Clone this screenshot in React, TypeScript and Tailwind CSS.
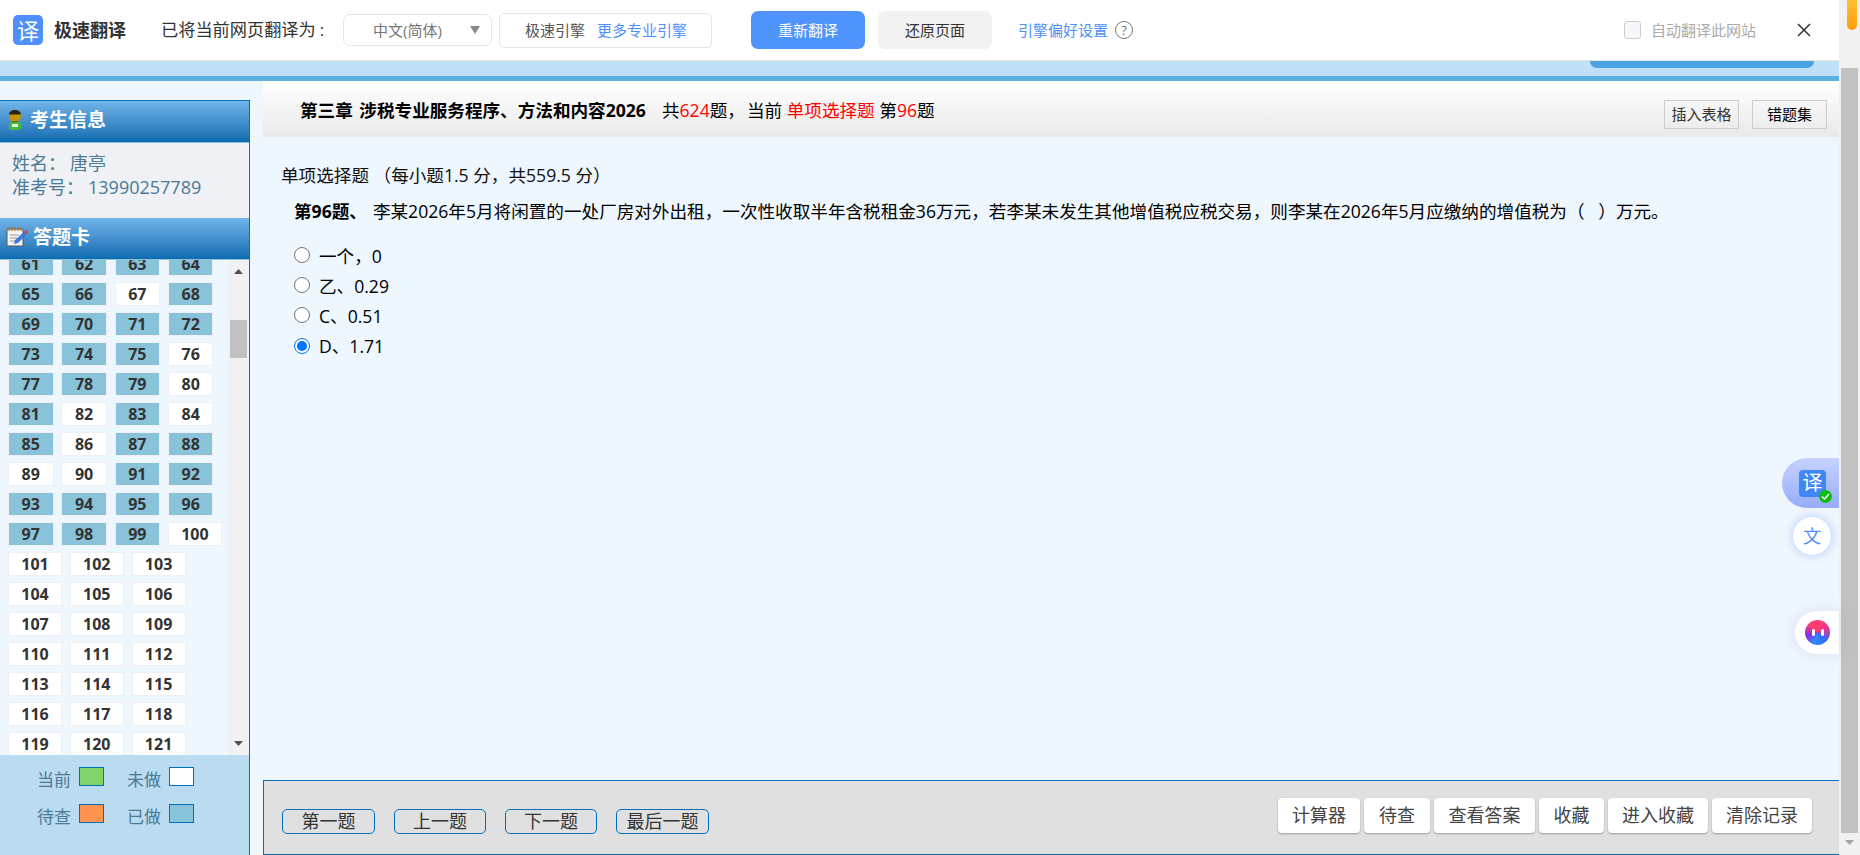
import React from "react";

const font = { fontFamily: '"Open Sans","Noto Sans CJK SC",sans-serif' };

const CM = "\uFF0C";
const CL = "\uFF1A";
const LP = "\uFF08";
const RP = "\uFF09";

const done = new Set([61,62,63,64,65,66,68,69,70,71,72,73,74,75,77,78,79,81,83,85,87,88,91,92,93,94,95,96,97,98,99]);
const nums = Array.from({ length: 61 }, (_, i) => i + 61);

function Heading({ icon, text, w }: { icon: React.ReactNode; text: string; w: string }) {
  return (
    <div className="flex h-[42px] items-center bg-gradient-to-b from-[#70b4ea] to-[#0a6cb1] border-b border-[#8fc0dc] pb-[3px]">
      <div className={`flex ${w} justify-center`}>{icon}</div>
      <span className="text-[19px] font-bold text-white">{text}</span>
    </div>
  );
}

function Legend({ label, color }: { label: string; color: string }) {
  return (
    <div className="flex w-[90px] items-start gap-[6px]">
      <span className="mt-[1px] w-[36px] text-[17px] leading-[24px] text-[#4a7a96]">{label}</span>
      <span className={`h-[19px] w-[25px] border border-[#0070bb] ${color}`} />
    </div>
  );
}

function NavButton({ text, w }: { text: string; w: string }) {
  return (
    <button className={`h-[25px] ${w} rounded-[5px] border border-[#0070bb] text-[18px] leading-[22px] text-[#333]`}>{text}</button>
  );
}

function ActionButton({ text, w }: { text: string; w: string }) {
  return (
    <button className={`h-[35px] ${w} rounded-[4px] bg-white text-[18px] text-[#444] shadow-[0_1px_2px_rgba(0,0,0,0.3)]`}>{text}</button>
  );
}

function Radio({ checked, label }: { checked?: boolean; label: string }) {
  return (
    <div className="flex h-[30.2px] items-center">
      {checked ? (
        <span className="h-[16px] w-[16px] rounded-full border-[1.5px] border-[#0075ff] bg-white p-[2px]">
          <span className="block h-full w-full rounded-full bg-[#0075ff]" />
        </span>
      ) : (
        <span className="h-[16px] w-[16px] rounded-full border-[1.5px] border-[#767676] bg-white" />
      )}
      <span className="ml-[9px] mt-[2px] text-[17.6px] text-black">{label}</span>
    </div>
  );
}

export default function App() {
  return (
    <div className="relative flex h-[855px] w-[1860px] flex-col overflow-hidden bg-[#eef6fe]" style={font}>
      {/* translate bar */}
      <div className="flex h-[61px] w-[1840px] shrink-0 items-center border-b border-[#e4e4e4] bg-white">
        <div className="ml-[13px] flex h-[30px] w-[30px] items-center justify-center rounded-[5px] bg-[#4f8ffb] text-[22px] leading-none text-white">译</div>
        <span className="ml-[11px] w-[107px] text-[18px] font-bold text-[#333]">极速翻译</span>
        <span className="w-[182px] text-[17.2px] text-[#333]">已将当前网页翻译为<span className="ml-[4px]">:</span></span>
        <div className="flex h-[32px] w-[149px] items-center rounded-[7px] border border-[#e5e5e5] pl-[29px] text-[15px] text-[#777]">
          <span className="w-[97px]">中文(简体)</span>
          <svg width="10" height="8" viewBox="0 0 10 8"><path d="M0 0h10L5 8z" fill="#888" /></svg>
        </div>
        <div className="ml-[7px] flex h-[35px] w-[213px] items-center rounded-[5px] border border-[#e5e5e5] pl-[25px] text-[15px]">
          <span className="w-[72px] text-[#555]">极速引擎</span>
          <span className="text-[#4f8ffb]">更多专业引擎</span>
        </div>
        <button className="ml-[39px] h-[38px] w-[114px] rounded-[7px] bg-[#4f94fd] text-[15px] text-white">重新翻译</button>
        <button className="ml-[13px] h-[38px] w-[114px] rounded-[7px] bg-[#f2f2f2] text-[15px] text-[#333]">还原页面</button>
        <span className="ml-[26px] text-[15px] text-[#4f8ffb]">引擎偏好设置</span>
        <span className="ml-[7px] flex h-[18px] w-[18px] items-center justify-center rounded-full border border-[#777] text-[13px] leading-none text-[#777]">?</span>
        <span className="ml-[491px] h-[18px] w-[17px] rounded-[3px] border border-[#ccc] bg-[#f6f7fb]" />
        <span className="ml-[10px] text-[15px] text-[#aaa]">自动翻译此网站</span>
        <svg className="ml-[41px]" width="14" height="14" viewBox="0 0 14 14"><path d="M1 1l12 12M13 1L1 13" stroke="#333" strokeWidth="1.5" fill="none" /></svg>
      </div>

      {/* page band */}
      <div className="h-[15px] w-[1840px] shrink-0 bg-[#bfe0f7]" />
      <div className="h-[5px] w-[1840px] shrink-0 bg-[#5fb0e0]" />

      <div className="flex min-h-0 flex-1">
        {/* sidebar */}
        <div className="flex w-[250px] shrink-0 flex-col pt-[19px]">
          <div className="flex min-h-0 flex-1 flex-col border-t border-r border-[#0070bb]">
            <Heading
              w="w-[30px]"
              text="考生信息"
              icon={
                <svg width="16" height="21" viewBox="0 0 16 21">
                  <ellipse cx="8" cy="6" rx="6" ry="6" fill="#c29408" />
                  <path d="M2 4.5a6 4.5 0 0 1 12 0z" fill="#2a2214" />
                  <rect x="5" y="11" width="6" height="2" fill="#7a5a08" />
                  <rect x="2" y="12" width="12" height="8" rx="2" fill="#3fb93f" />
                  <rect x="5" y="14" width="6" height="3" fill="#dff5df" />
                </svg>
              }
            />
            <div className="h-[75px] bg-[#eff1f4] pl-[12px] pt-[8px] text-[18px] leading-[24px] text-[#4a7a96]">
              <div>姓名{CL}<span className="ml-[4px]">唐亭</span></div>
              <div>准考号{CL}<span className="ml-[4px]">13990257789</span></div>
            </div>
            <Heading
              w="w-[33px]"
              text="答题卡"
              icon={
                <svg width="22" height="22" viewBox="0 0 22 22">
                  <rect x="1" y="3" width="16" height="17" rx="1" fill="#f4f4f4" stroke="#555" />
                  <path d="M3 1v4M6 1v4M9 1v4M12 1v4M15 1v4" stroke="#b5702a" strokeWidth="1.2" />
                  <path d="M4 9h9M4 12h7M4 15h5" stroke="#999" />
                  <path d="M8 18l1-4L18 6l3 2-9 9z" fill="#3a78d8" />
                  <path d="M18 6l3 2 1-2-2-2z" fill="#e23b3b" />
                </svg>
              }
            />
            <div className="flex min-h-0 flex-1">
              <div className="min-w-0 flex-1 overflow-hidden pl-[8px]">
                <div className="mt-[-8px] flex flex-wrap gap-x-[7.8px] gap-y-[6px]">
                  {nums.map((n) => (
                    <div
                      key={n}
                      className={`flex h-[24px] items-center justify-center border border-[#eef0f4] text-[16px] font-bold text-[#333] ${n >= 100 ? "w-[54px]" : "w-[45.5px]"} ${done.has(n) ? "bg-[#88c3da]" : "bg-white"}`}
                    >
                      {n}
                    </div>
                  ))}
                </div>
              </div>
              <div className="flex w-[21px] shrink-0 flex-col items-center bg-[#f1f1f1]">
                <svg className="mt-[9px]" width="9" height="5" viewBox="0 0 9 5"><path d="M0 5h9L4.5 0z" fill="#505050" /></svg>
                <div className="mt-[46px] h-[38px] w-[17px] bg-[#c1c1c1]" />
                <svg className="mt-auto mb-[9px]" width="9" height="5" viewBox="0 0 9 5"><path d="M0 0h9L4.5 5z" fill="#505050" /></svg>
              </div>
            </div>
            <div className="h-[100px] shrink-0 bg-[#bbdcf0] pl-[37px] pt-[12px]">
              <div className="flex">
                <Legend label="当前" color="bg-[#7fd36b]" />
                <Legend label="未做" color="bg-white" />
              </div>
              <div className="mt-[12px] flex">
                <Legend label="待查" color="bg-[#ff9350]" />
                <Legend label="已做" color="bg-[#88c3da]" />
              </div>
            </div>
          </div>
        </div>

        {/* main */}
        <div className="ml-[13px] flex w-[1577px] flex-col">
          <div className="flex h-[56px] shrink-0 items-start bg-gradient-to-b from-white to-[#e9e9e9] pl-[37px]">
            <div className="mt-[17px] flex-1 text-[17.6px] leading-[24px] text-black">
              <span className="font-bold">第三章 <span className="ml-[2px]">涉税专业服务程序、方法和内容2026</span></span>
              <span className="ml-[16px]">共<span className="text-[#ff0000]">624</span>题{CM}<span className="ml-[2px]">当前</span> <span className="text-[#ff0000]">单项选择题</span> 第<span className="text-[#ff0000]">96</span>题</span>
            </div>
            <button className="mt-[19px] h-[29px] w-[75px] border border-[#ccc] text-[15px] text-[#333]">插入表格</button>
            <button className="ml-[13px] mr-[13px] mt-[19px] h-[29px] w-[75px] border border-[#ccc] text-[15px] text-black">错题集</button>
          </div>

          <div className="min-h-0 flex-1 pl-[18px] pt-[27px]">
            <div className="text-[17.6px] leading-[22px] text-[#111]">单项选择题 {LP}每小题1.5 分{CM}共559.5 分{RP}</div>
            <div className="mt-[14px] pl-[13px] text-[17.6px] leading-[22px] text-black">
              <span className="font-bold">第96题、</span>
              <span className="ml-[6px]">李某2026年5月将闲置的一处厂房对外出租{CM}一次性收取半年含税租金36万元{CM}若李某未发生其他增值税应税交易{CM}则李某在2026年5月应缴纳的增值税为{LP}&nbsp;&nbsp;&nbsp;{RP}万元。</span>
            </div>
            <div className="mt-[18px] pl-[13px]">
              <Radio label={`一个${CM}0`} />
              <Radio label="乙、0.29" />
              <Radio label="C、0.51" />
              <Radio checked label="D、1.71" />
            </div>
          </div>

          <div className="flex h-[75px] shrink-0 items-center border border-[#0070bb] bg-[#e0e0e0] pl-[18px] pr-[27px]">
            <div className="mt-[7px] flex gap-[19px]">
              <NavButton text="第一题" w="w-[93px]" />
              <NavButton text="上一题" w="w-[92px]" />
              <NavButton text="下一题" w="w-[92px]" />
              <NavButton text="最后一题" w="w-[93px]" />
            </div>
            <div className="ml-auto mb-[4px] flex gap-[4px]">
              <ActionButton text="计算器" w="w-[82px]" />
              <ActionButton text="待查" w="w-[66px]" />
              <ActionButton text="查看答案" w="w-[101px]" />
              <ActionButton text="收藏" w="w-[65px]" />
              <ActionButton text="进入收藏" w="w-[100px]" />
              <ActionButton text="清除记录" w="w-[100px]" />
            </div>
          </div>
        </div>
      </div>

      {/* page scrollbar */}
      <div className="absolute right-0 top-0 flex h-[855px] w-[21px] flex-col items-center bg-[#f1f1f1]">
        <div className="absolute left-[8px] top-0 h-[30px] w-[10px] rounded-b-[5px] bg-gradient-to-b from-[#ffc02e] to-[#ff9d0a]" />
        <div className="mt-[68px] h-[765px] w-[17px] bg-[#c1c1c1]" />
        <svg className="mt-[7px]" width="9" height="5" viewBox="0 0 9 5"><path d="M0 0h9L4.5 5z" fill="#a3a3a3" /></svg>
      </div>

      {/* page's blue button peeking out from below the translate bar */}
      <div className="absolute left-[1590px] top-[61px] h-[7px] w-[224px] rounded-b-[8px] bg-[#4aa3e0]" />

      {/* floating widgets */}
      <div className="absolute left-[1782px] top-[458px] flex h-[50px] w-[57px] items-center rounded-l-full bg-gradient-to-b from-[#c6d2ff] to-[#97acfb] pl-[17px]">
        <div className="relative flex h-[27px] w-[27px] items-center justify-center rounded-[4px] bg-[#3e87f5] text-[20px] leading-none text-white">
          译
          <span className="absolute right-[-6px] bottom-[-6px] flex h-[13px] w-[13px] items-center justify-center rounded-full bg-[#0bbf0b]">
            <svg width="9" height="7" viewBox="0 0 9 7"><path d="M1 3.5l2.5 2.5L8 1" stroke="#fff" strokeWidth="1.5" fill="none" /></svg>
          </span>
        </div>
      </div>
      <div className="absolute left-[1793px] top-[517px] flex h-[38px] w-[38px] items-center justify-center rounded-full bg-white text-[18px] leading-none text-[#4f8ffb] shadow-[0_0_8px_rgba(90,140,255,0.45)]">文</div>
      <div className="absolute left-[1795px] top-[611px] flex h-[43px] w-[44px] items-center rounded-l-full bg-white pl-[10px] shadow-[0_0_14px_rgba(120,140,190,0.2)]">
        <div className="flex h-[25px] w-[25px] items-center justify-center gap-[6px] rounded-full bg-[conic-gradient(from_315deg,#ff3d6e,#ff3d6e,#e0339a,#2f6bff,#2f8bff,#8a2be2,#ff3d6e)] blur-[0.6px]">
          <span className="h-[7px] w-[3px] rounded-full bg-white" />
          <span className="h-[7px] w-[3px] rounded-full bg-white" />
        </div>
      </div>
    </div>
  );
}
